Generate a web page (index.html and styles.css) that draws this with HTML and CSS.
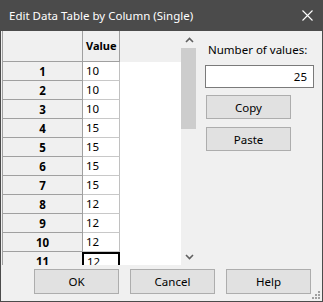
FILE: index.html
```html
<!DOCTYPE html>
<html>
<head>
<meta charset="utf-8">
<title>Edit Data Table by Column (Single)</title>
<link rel="stylesheet" href="styles.css">
</head>
<body>
<div class="win">
  <div class="titlebar">
    <span class="title">Edit Data Table by Column (Single)</span>
    <svg class="close" width="11" height="11" viewBox="0 0 11 11"><path d="M0.5 0.5 L10.5 10.5 M10.5 0.5 L0.5 10.5" stroke="#fff" stroke-width="1.1" fill="none"/></svg>
  </div>
  <div class="main">
    <div class="gridbox">
      <div class="grid">
        <div class="row head">
          <div class="rh"></div>
          <div class="val hv">Value</div>
          <div class="fill"></div>
        </div>
        <div class="row"><div class="rh">1</div><div class="val">10</div><div class="fill"></div></div>
        <div class="row"><div class="rh">2</div><div class="val">10</div><div class="fill"></div></div>
        <div class="row"><div class="rh">3</div><div class="val">10</div><div class="fill"></div></div>
        <div class="row"><div class="rh">4</div><div class="val">15</div><div class="fill"></div></div>
        <div class="row"><div class="rh">5</div><div class="val">15</div><div class="fill"></div></div>
        <div class="row"><div class="rh">6</div><div class="val">15</div><div class="fill"></div></div>
        <div class="row"><div class="rh">7</div><div class="val">15</div><div class="fill"></div></div>
        <div class="row"><div class="rh">8</div><div class="val">12</div><div class="fill"></div></div>
        <div class="row"><div class="rh">9</div><div class="val">12</div><div class="fill"></div></div>
        <div class="row"><div class="rh">10</div><div class="val">12</div><div class="fill"></div></div>
        <div class="row"><div class="rh">11</div><div class="val cur">12</div><div class="fill"></div></div>
      </div>
      <div class="vscroll">
        <svg class="arrow" width="9" height="6" viewBox="0 0 9 6"><path d="M1 5 L4.5 1.5 L8 5" stroke="#606060" stroke-width="1.6" fill="none"/></svg>
        <div class="track"><div class="thumb"></div></div>
        <svg class="arrow" width="9" height="6" viewBox="0 0 9 6"><path d="M1 1 L4.5 4.5 L8 1" stroke="#606060" stroke-width="1.6" fill="none"/></svg>
      </div>
    </div>
    <div class="side">
      <div class="lbl">Number of values:</div>
      <div class="numbox">25</div>
      <button class="btn small">Copy</button>
      <button class="btn small">Paste</button>
    </div>
  </div>
  <div class="footer">
    <button class="btn big">OK</button>
    <button class="btn big">Cancel</button>
    <button class="btn big">Help</button>
    <svg class="grip" width="10" height="10" viewBox="0 0 10 10">
      <rect x="7" y="1" width="2" height="2" fill="#a0a0a0"/>
      <rect x="4" y="4" width="2" height="2" fill="#a0a0a0"/>
      <rect x="7" y="4" width="2" height="2" fill="#a0a0a0"/>
      <rect x="1" y="7" width="2" height="2" fill="#a0a0a0"/>
      <rect x="4" y="7" width="2" height="2" fill="#a0a0a0"/>
      <rect x="7" y="7" width="2" height="2" fill="#a0a0a0"/>
    </svg>
  </div>
</div>
</body>
</html>
```
FILE: styles.css
```css
body {
  margin: 0;
  font-family: "Noto Sans", "Open Sans", sans-serif;
  font-size: 11px;
  color: #000;
}

.win {
  width: 321px;
  height: 300px;
  border: 1px solid #4b4b4b;
  background: #f0f0f0;
  display: flex;
  flex-direction: column;
}

.titlebar {
  height: 30px;
  background: #4b4b4b;
  color: #fff;
  display: flex;
  align-items: center;
  padding: 0 9px 0 8px;
  position: relative;
}
.title { font-size: 11.5px; margin-top: -2px; }
.close { position: absolute; right: 9px; top: 9px; }

.main {
  display: flex;
  height: 234px;
}

.gridbox {
  display: flex;
  margin-left: 1px;
  border-left: 1px solid #a0a0a0;
  width: 195px;
  height: 234px;
  background: #fff;
}

.grid {
  width: 178px;
  overflow: hidden;
}

.row {
  display: flex;
  height: 19px;
}
.row.head { height: 31px; background: #f0f0f0; }

.rh {
  width: 79px;
  background: #f0f0f0;
  border-right: 1px solid #a0a0a0;
  border-bottom: 1px solid #a0a0a0;
  font-weight: bold;
  font-size: 11.5px;
  text-align: center;
  line-height: 19px;
}
.head .rh { height: 30px; }

.val {
  width: 33px;
  padding-left: 3px;
  border-right: 1px solid #c0c0c0;
  border-bottom: 1px solid #c8c8c8;
  font-size: 11.5px;
  line-height: 18px;
}
.val.hv {
  background: #f0f0f0;
  font-weight: bold;
  font-size: 11px;
  border-right-color: #a0a0a0;
  border-bottom-color: #a0a0a0;
  line-height: 30px;
  height: 30px;
}
.val.cur {
  border: 2px solid #000;
  margin-left: -1px;
  width: 31px;
  line-height: 16px;
  padding-left: 3px;
}

.fill { flex: 1; }

.vscroll {
  width: 17px;
  background: #f0f0f0;
  display: flex;
  flex-direction: column;
  align-items: center;
}
.arrow { margin: 6px 0 5px; flex-shrink: 0; }
.track { flex: 1; width: 17px; }
.thumb {
  width: 15px;
  height: 81px;
  background: #cdcdcd;
}

.side {
  flex: 1;
  padding: 11px 8px 0 7px;
}
.lbl { margin-left: 3px; line-height: 16px; font-size: 11.5px; }
.numbox {
  margin-top: 7px;
  height: 21px;
  width: 101px;
  border: 1px solid #7a7a7a;
  background: #fff;
  text-align: right;
  padding-right: 6px;
  line-height: 21px;
  font-size: 11.5px;
}

.btn {
  font-family: inherit;
  font-size: 11.5px;
  background: #e1e1e1;
  border: 1px solid #adadad;
  color: #000;
  padding: 0;
}
.btn.small {
  display: block;
  width: 85px;
  height: 24px;
  margin: 7px 0 0 1px;
}
.btn.small + .btn.small { margin-top: 8px; }

.footer {
  flex: 1;
  display: flex;
  gap: 11px;
  padding: 4px 0 0 33px;
  position: relative;
}
.btn.big {
  width: 85px;
  height: 25px;
}
.grip { position: absolute; right: 1px; bottom: 1px; }
```
